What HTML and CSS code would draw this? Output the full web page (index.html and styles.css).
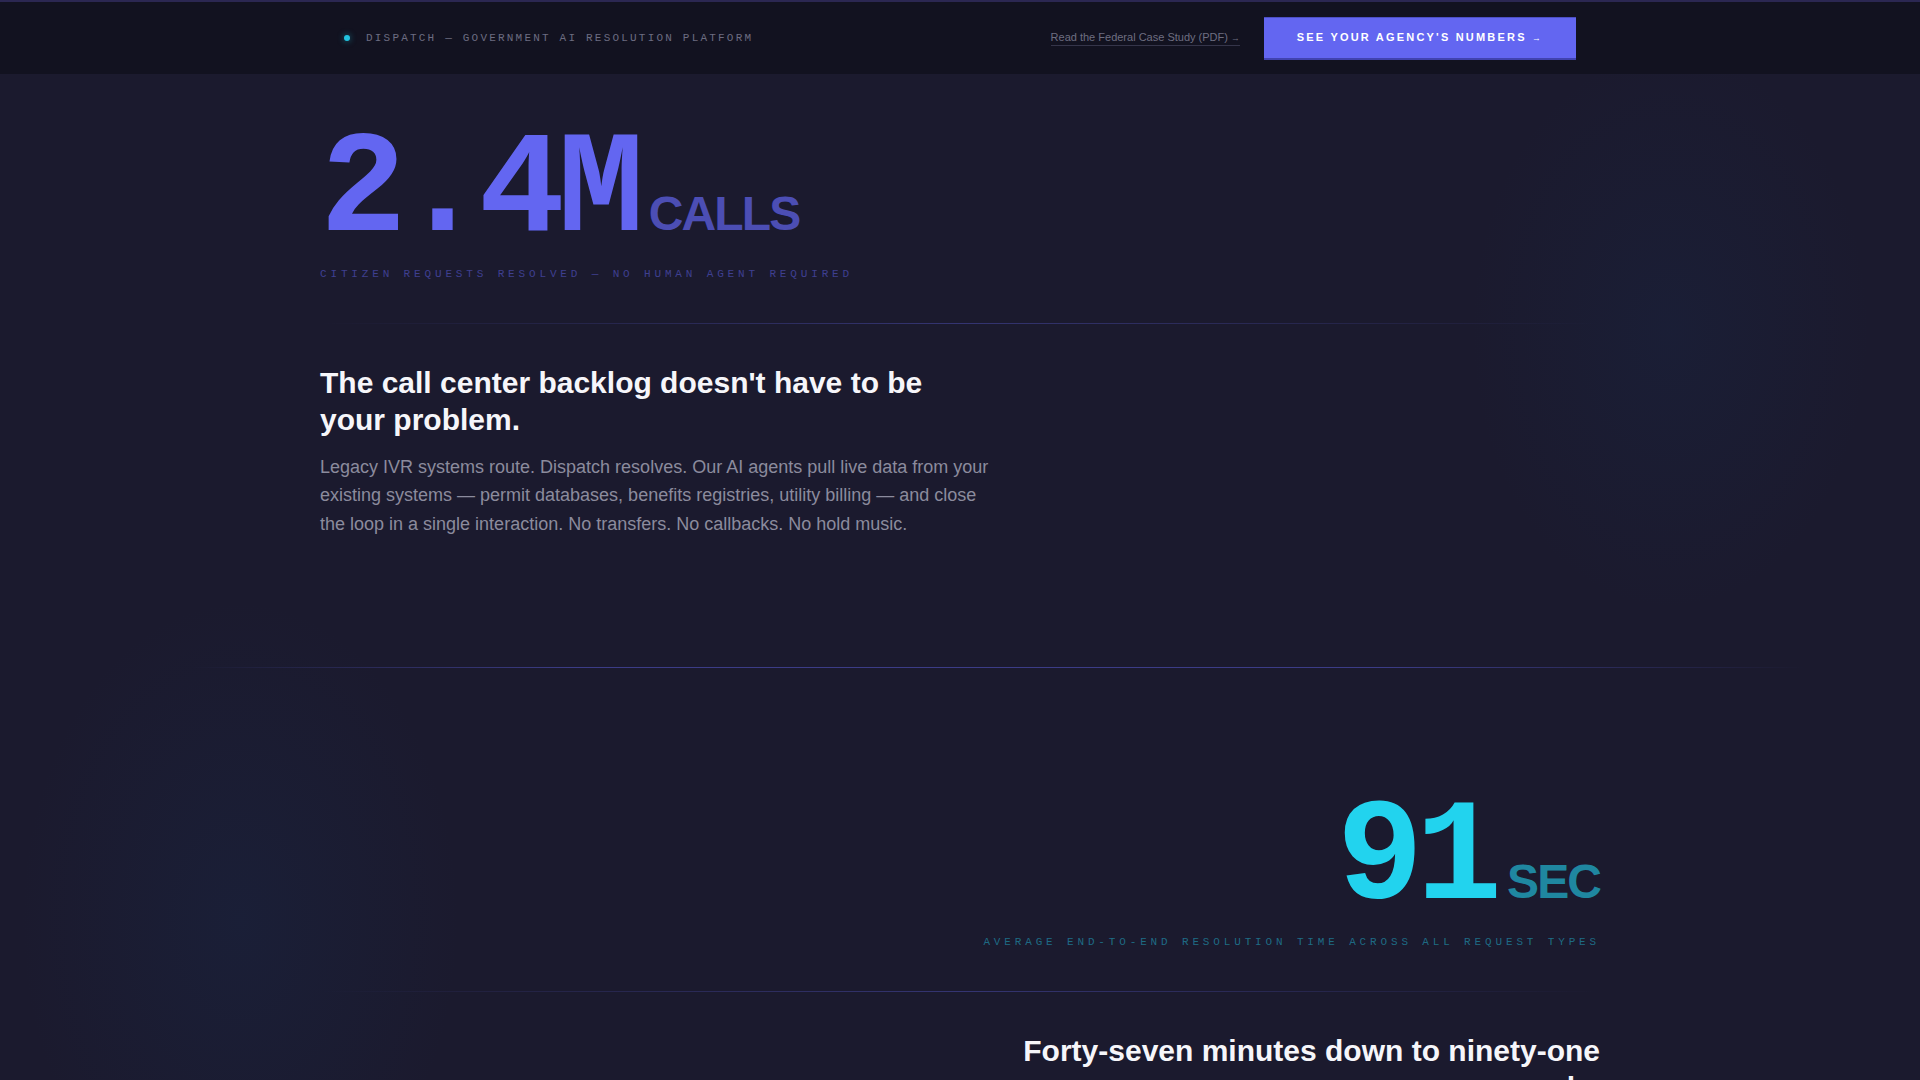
FILE: index.html
```
<!DOCTYPE html>
<html lang="en">
<head>
  <meta charset="UTF-8">
  <meta name="viewport" content="width=device-width, initial-scale=1">
  <title>Dispatch — Government AI Resolution Platform</title>
  <link rel="stylesheet" href="styles.css">
</head>
<body>

<!-- TOP BAR -->
<header class="topbar">
  <div class="topbar-inner">
    <div class="brand">
      <span class="brand-dot"></span>
      <span>DISPATCH — GOVERNMENT AI RESOLUTION PLATFORM</span>
    </div>
    <div class="topbar-actions">
      <a class="case-link" href="#">Read the Federal Case Study (PDF) <span class="arrow">→</span></a>
      <a class="cta" href="#">SEE YOUR AGENCY'S NUMBERS <span class="arrow">→</span></a>
    </div>
  </div>
</header>

<main>

  <!-- STAT 1 -->
  <section class="stat-section">
    <div class="container">
      <div class="stat">
        <span class="stat-value">2.4M</span>
        <span class="stat-unit">CALLS</span>
      </div>
      <p class="stat-label">CITIZEN REQUESTS RESOLVED — NO HUMAN AGENT REQUIRED</p>
      <div class="rule"></div>
      <div class="copy">
        <h2>The call center backlog doesn't have to be your problem.</h2>
        <p>Legacy IVR systems route. Dispatch resolves. Our AI agents pull live data from your existing systems — permit databases, benefits registries, utility billing — and close the loop in a single interaction. No transfers. No callbacks. No hold music.</p>
      </div>
    </div>
  </section>

  <div class="section-divider"></div>

  <!-- STAT 2 -->
  <section class="stat-section stat-section--right cyan">
    <div class="container">
      <div class="stat">
        <span class="stat-value">91</span>
        <span class="stat-unit">SEC</span>
      </div>
      <p class="stat-label">AVERAGE END-TO-END RESOLUTION TIME ACROSS ALL REQUEST TYPES</p>
      <div class="rule"></div>
      <div class="copy">
        <h2>Forty-seven minutes down to ninety-one seconds.</h2>
        <p>Residents get answers while they're still on the line. Your staff get their afternoons back for the cases that actually need a person.</p>
      </div>
    </div>
  </section>

</main>

</body>
</html>
```

FILE: styles.css
```
body {
  margin: 0;
  font-family: "Liberation Sans", Arial, sans-serif;
  color: #f4f4f8;
  background-color: #1b1a2e;
  background-image:
    radial-gradient(ellipse 200px 280px at 1670px 330px, rgba(20, 60, 110, 0.12), transparent),
    radial-gradient(ellipse 220px 320px at 240px 920px, rgba(20, 60, 110, 0.14), transparent);
  background-repeat: no-repeat;
}

a {
  text-decoration: none;
}

.container {
  max-width: 1280px;
  margin: 0 auto;
}

/* Top bar */
.topbar {
  background: #121220;
  border-top: 2px solid #2b2752;
}

.topbar-inner {
  max-width: 1280px;
  margin: 0 auto;
  padding: 0 24px;
  height: 72px;
  display: flex;
  align-items: center;
  justify-content: space-between;
  box-sizing: border-box;
}

.brand {
  display: flex;
  align-items: center;
  gap: 16px;
  font-family: "Liberation Mono", monospace;
  font-size: 11px;
  letter-spacing: 0.2em;
  color: #6c6c80;
}

.brand-dot {
  width: 6px;
  height: 6px;
  border-radius: 50%;
  background: #22c3e0;
  box-shadow: 0 0 6px rgba(34, 211, 238, 0.5);
}

.topbar-actions {
  display: flex;
  align-items: center;
  gap: 24px;
}

.case-link {
  font-size: 11px;
  color: #6e6e80;
  padding-bottom: 2px;
  border-bottom: 1px solid #35354a;
}

.arrow {
  font-size: 0.8em;
}

.cta {
  display: block;
  background: #6366f1;
  color: #fff;
  font-size: 11px;
  font-weight: bold;
  letter-spacing: 0.2em;
  line-height: 15px;
  padding: 12px 33px;
  border-top: 1px solid #4d4fc4;
  border-bottom: 2px solid #4143b0;
}

/* Stat sections */
.stat-section {
  padding: 53px 0 128px;
}

.stat-section--right {
  padding-top: 127px;
  text-align: right;
}

.stat {
  display: flex;
  align-items: baseline;
  gap: 12px;
}

.stat-section--right .stat {
  justify-content: flex-end;
}

.stat-value {
  font-family: "Liberation Mono", monospace;
  font-weight: bold;
  font-size: 144px;
  line-height: 0.9;
  letter-spacing: -0.05em;
  color: #6366f1;
}

.stat-unit {
  font-size: 48px;
  font-weight: bold;
  line-height: 1;
  letter-spacing: -0.04em;
  color: rgba(99, 102, 241, 0.7);
}

.stat-label {
  margin: 9px 0 0;
  font-family: "Liberation Mono", monospace;
  font-size: 11px;
  line-height: 16px;
  letter-spacing: 0.35em;
  color: rgba(99, 102, 241, 0.5);
}

.rule {
  height: 1px;
  margin-top: 41px;
  background: linear-gradient(90deg, transparent, rgba(99, 102, 241, 0.35), transparent);
}

.copy {
  max-width: 672px;
  margin-top: 40px;
}

.stat-section--right .copy {
  margin-left: auto;
}

.copy h2 {
  margin: 0;
  font-size: 30px;
  line-height: 1.25;
  font-weight: bold;
  color: #f6f6fa;
}

.copy p {
  margin: 14px 0 0;
  font-size: 18px;
  line-height: 1.6;
  color: #8b8b9d;
}

.section-divider {
  height: 1px;
  background: linear-gradient(90deg, transparent 10%, rgba(99, 102, 241, 0.45) 30%, rgba(99, 102, 241, 0.45) 72%, transparent 94%);
}

/* Cyan variant */
.cyan .stat-value {
  color: #22d3ee;
}

.cyan .stat-unit {
  color: rgba(34, 211, 238, 0.6);
}

.cyan .stat-label {
  color: rgba(34, 211, 238, 0.45);
}
```
